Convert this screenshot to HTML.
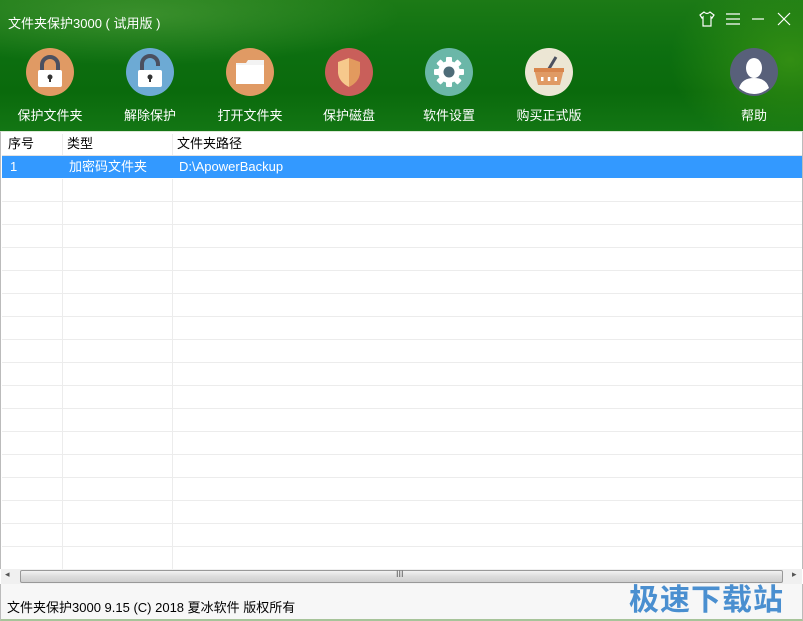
<!DOCTYPE html>
<html><head><meta charset="utf-8"><style>
*{margin:0;padding:0;box-sizing:border-box}
body{width:803px;height:621px;overflow:hidden;font-family:"Liberation Sans","Noto Sans CJK SC",sans-serif;font-size:13px;background:#fff;position:relative}
#hd{position:absolute;left:0;top:0;width:803px;height:131px;
background:radial-gradient(ellipse 260px 50px at 140px 15px,rgba(110,180,80,.4),transparent),
radial-gradient(ellipse 120px 90px at 790px 60px,rgba(60,150,20,.8),transparent),
linear-gradient(180deg,#1c7a16 0%,#0d6f10 40%,#0a6a0c 70%,#137614 100%)}
#title{position:absolute;left:8px;top:13px;color:#fff;font-size:13px}
.btn{position:absolute;top:48px;width:100px;text-align:center;color:#fff;font-size:13px}
.btn svg{display:block;margin:0 auto}
.btn span{display:block;margin-top:9px}
.ctl{position:absolute;top:10px;color:#fff}
#tbl{position:absolute;left:0;top:131px;width:803px;height:438px;border-top:1px solid #dbe8d5;border-left:1px solid #bbb;border-right:1px solid #bbb}
.row{position:absolute;left:1px;width:800px;height:23px;border-bottom:1px solid #ececec}
.vl{position:absolute;top:2px;width:1px;height:436px;background:#ececec}
.c{position:absolute;top:0;line-height:22px;height:22px;font-size:13px;white-space:nowrap}
#sb{position:absolute;left:1px;top:569px;width:801px;height:15px;background:#f0f0f0}
#foot{position:absolute;left:0;top:584px;width:803px;height:37px;background:#f7f7f7;border-bottom:2px solid #a7c49a;border-left:1px solid #bbb;border-right:1px solid #bbb}
</style></head><body>
<div id="hd">
<div id="title">文件夹保护3000 ( 试用版 )</div>
<svg class="ctl" style="left:698px" width="18" height="18" viewBox="0 0 18 18" fill="none" stroke="#fff" stroke-width="1.2"><path d="M6 2 L2 5 L4 8 L5 7 V16 H13 V7 L14 8 L16 5 L12 2 Q9 5 6 2Z"/></svg>
<svg class="ctl" style="left:725px" width="16" height="18" viewBox="0 0 16 18" stroke="#fff" stroke-width="1.2"><path d="M1 4H15M1 9H15M1 14H15"/></svg>
<svg class="ctl" style="left:751px" width="14" height="18" viewBox="0 0 14 18" stroke="#fff" stroke-width="1.2"><path d="M1 9H13"/></svg>
<svg class="ctl" style="left:776px" width="16" height="18" viewBox="0 0 16 18" stroke="#fff" stroke-width="1.2"><path d="M2 3L14 15M14 3L2 15"/></svg>

<div class="btn" style="left:0"><svg width="48" height="48" viewBox="0 0 48 48"><circle cx="24" cy="24" r="24" fill="#e09a64"/><path d="M16 23V17a8 8 0 0 1 16 0v6" fill="none" stroke="#4b5060" stroke-width="4"/><rect x="12" y="22" width="24" height="17" rx="2" fill="#fff"/><circle cx="24" cy="29" r="2.5" fill="#333"/><rect x="23" y="29" width="2" height="5" fill="#333"/></svg><span>保护文件夹</span></div>
<div class="btn" style="left:100px"><svg width="48" height="48" viewBox="0 0 48 48"><circle cx="24" cy="24" r="24" fill="#6daad4"/><path d="M16 23V16a8 8 0 0 1 16 0v2" fill="none" stroke="#4b5060" stroke-width="4"/><rect x="12" y="22" width="24" height="17" rx="2" fill="#fff"/><circle cx="24" cy="29" r="2.5" fill="#333"/><rect x="23" y="29" width="2" height="5" fill="#333"/></svg><span>解除保护</span></div>
<div class="btn" style="left:200px"><svg width="48" height="48" viewBox="0 0 48 48"><circle cx="24" cy="24" r="24" fill="#e09a64"/><path d="M10 15H20L22 12H38V36H10Z" fill="#f3f3f3"/><rect x="10" y="17" width="28" height="19" fill="#fff"/></svg><span>打开文件夹</span></div>
<div class="btn" style="left:299px"><svg width="48" height="48" viewBox="0 0 48 48"><circle cx="24" cy="24" r="24" fill="#c95f5a"/><path d="M24 10 L13 14 V25 Q14 34 24 39Z" fill="#f6c98c"/><path d="M24 10 L35 14 V25 Q34 34 24 39Z" fill="#e29a5e"/></svg><span>保护磁盘</span></div>
<div class="btn" style="left:399px"><svg width="48" height="48" viewBox="0 0 48 48"><circle cx="24" cy="24" r="24" fill="#6bb7a8"/><g fill="#fff"><circle cx="24" cy="24" r="11"/><g id="t"><rect x="21" y="9" width="6" height="30" rx="1"/></g><use href="#t" transform="rotate(45 24 24)"/><use href="#t" transform="rotate(90 24 24)"/><use href="#t" transform="rotate(135 24 24)"/></g><circle cx="24" cy="24" r="5.5" fill="#4e6c78"/></svg><span>软件设置</span></div>
<div class="btn" style="left:499px"><svg width="48" height="48" viewBox="0 0 48 48"><circle cx="24" cy="24" r="24" fill="#ece6d4"/><path d="M22 24 L31 9" stroke="#4b5060" stroke-width="3"/><path d="M9 21H39L35 37H13Z" fill="#e09a64"/><rect x="9" y="20" width="30" height="4" fill="#d8854c"/><g fill="#fff"><rect x="16" y="29" width="2.5" height="4"/><rect x="22.8" y="29" width="2.5" height="4"/><rect x="29.5" y="29" width="2.5" height="4"/></g></svg><span>购买正式版</span></div>
<div class="btn" style="left:704px"><svg width="48" height="48" viewBox="0 0 48 48"><circle cx="24" cy="24" r="24" fill="#58607a"/><ellipse cx="24" cy="20" rx="8" ry="10" fill="#fff"/><path d="M9 40 Q12 30 24 30 Q36 30 39 40 Q32 46 24 46 Q16 46 9 40Z" fill="#fff"/></svg><span>帮助</span></div>
</div>

<div id="tbl">
<div class="vl" style="left:61px"></div><div class="vl" style="left:171px"></div>
<div class="row" style="top:1px;height:23px;border-bottom:1px solid #e2e2e2"><span class="c" style="left:6px">序号</span><span class="c" style="left:65px">类型</span><span class="c" style="left:175px">文件夹路径</span></div>
<div class="row" style="top:24px;background:#3399ff;color:#fff;border-bottom:1px solid #fff"><span class="c" style="left:8px">1</span><span class="c" style="left:67px">加密码文件夹</span><span class="c" style="left:177px">D:\ApowerBackup</span></div>
<div class="row" style="top:47px"></div><div class="row" style="top:70px"></div><div class="row" style="top:93px"></div><div class="row" style="top:116px"></div><div class="row" style="top:139px"></div><div class="row" style="top:162px"></div><div class="row" style="top:185px"></div><div class="row" style="top:208px"></div><div class="row" style="top:231px"></div><div class="row" style="top:254px"></div><div class="row" style="top:277px"></div><div class="row" style="top:300px"></div><div class="row" style="top:323px"></div><div class="row" style="top:346px"></div><div class="row" style="top:369px"></div><div class="row" style="top:392px"></div><div class="row" style="top:415px;border:none"></div>
</div>
<div id="sb">
<span style="position:absolute;left:4px;top:0;font-size:9px;color:#555">◂</span>
<div style="position:absolute;left:19px;top:1px;width:763px;height:13px;border:1px solid #999;border-radius:2px;background:linear-gradient(#f2f2f2,#dcdcdc 50%,#cfcfcf)"></div>
<span style="position:absolute;left:395px;top:0px;font-size:9px;color:#555">III</span>
<span style="position:absolute;left:791px;top:0;font-size:9px;color:#555">▸</span>
</div>
<div id="foot">
<span style="position:absolute;left:6px;top:13px;font-size:13px">文件夹保护3000 9.15 (C) 2018 夏冰软件 版权所有</span>
<span style="position:absolute;left:628px;top:-9px;font-size:30px;font-weight:bold;color:#4a8fd0;letter-spacing:1px">极速下载站</span>
</div>
</body></html>
